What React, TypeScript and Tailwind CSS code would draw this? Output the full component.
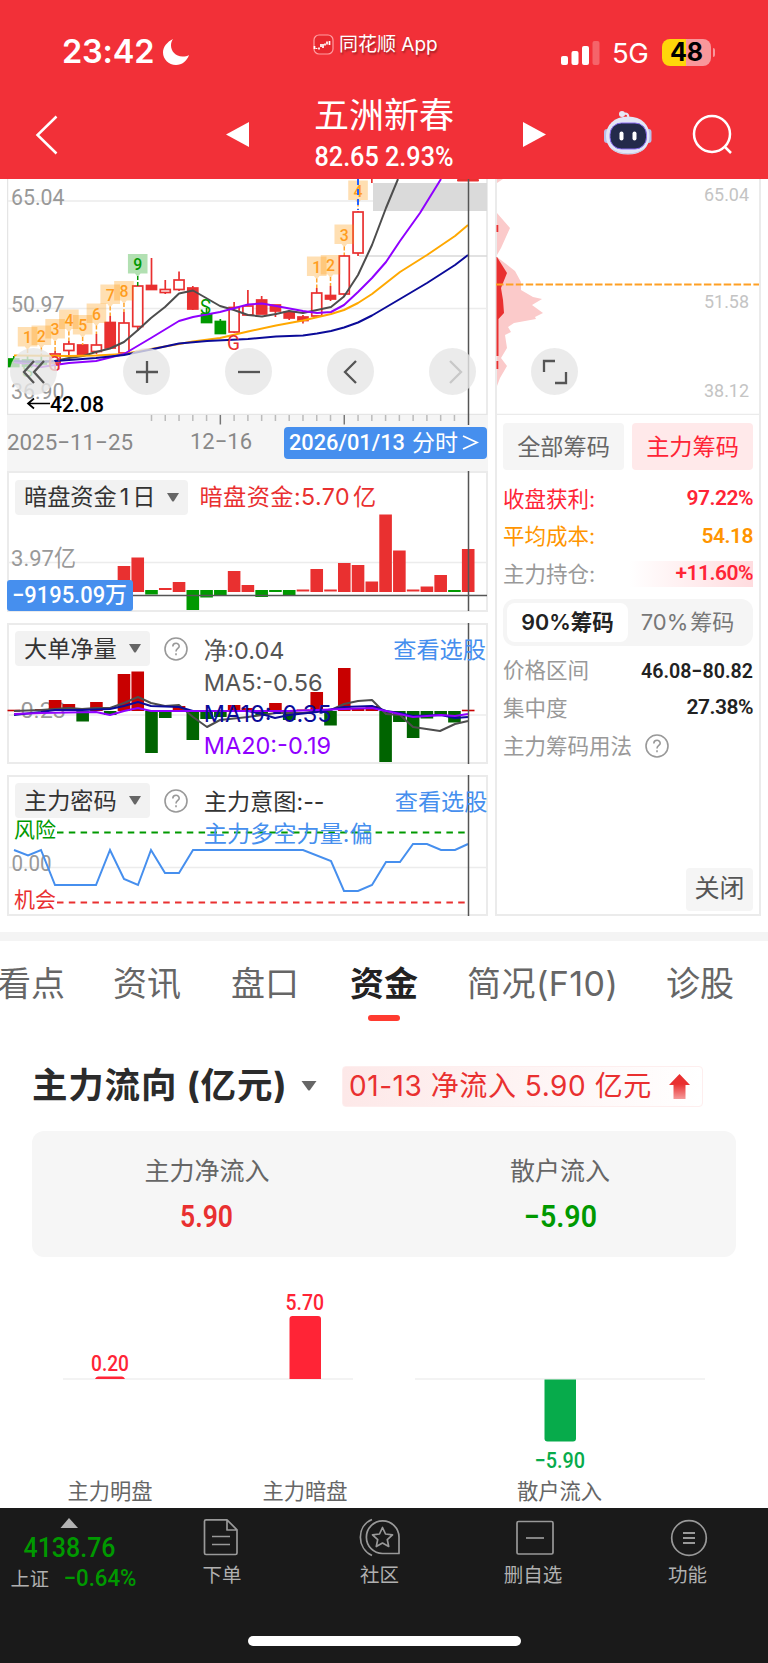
import type { ReactNode } from 'react'

const STEP = 13.77
const RED = '#e93030'
const GREEN = '#009900'

const cx = (i: number) => 13.8 + STEP * i

// [index, body top, body bottom, high, low, kind]
type Candle = [number, number, number, number, number, 'hollow' | 'red' | 'green']

const candles: Candle[] = [
  [0, 359, 366.5, 356, 366.5, 'green'],
  [1, 360, 366, 356, 368, 'green'],
  [2, 361, 364, 356, 366, 'green'],
  [3, 354, 363, 351, 370, 'hollow'],
  [4, 344, 350.5, 341, 355, 'hollow'],
  [5, 345, 354.5, 345, 354.5, 'red'],
  [6, 345, 351.5, 334, 354, 'hollow'],
  [7, 322.5, 348, 316, 349, 'red'],
  [8, 323, 353, 312, 355, 'hollow'],
  [9, 286, 326.5, 286, 331, 'hollow'],
  [10, 285.5, 289.5, 258, 289.5, 'red'],
  [11, 289.5, 292.5, 280, 294, 'hollow'],
  [12, 280, 289.5, 271.5, 291, 'hollow'],
  [13, 288, 309, 286, 310, 'red'],
  [14, 314, 322.5, 308, 323, 'green'],
  [15, 321.5, 333.5, 319, 333.5, 'green'],
  [16, 307.5, 332, 302, 333, 'hollow'],
  [17, 306, 315, 290, 316, 'hollow'],
  [18, 300, 314, 296, 314, 'red'],
  [19, 305, 311, 305, 317, 'red'],
  [20, 312, 318, 310, 320, 'red'],
  [21, 317, 320.5, 315, 323.5, 'red'],
  [22, 293, 316, 288, 318, 'hollow'],
  [23, 295.5, 299, 286, 301, 'red'],
  [24, 256, 294, 255, 296, 'hollow'],
  [25, 212, 253, 211, 256, 'hollow'],
  [26, 170, 175, 170, 183, 'red'],
]

// [index, top, digit, line end]
const counts: [number, number, string, number][] = [
  [1, 327, '1', 356],
  [2, 325.5, '2', 356],
  [3, 319, '3', 351],
  [4, 309.5, '4', 341],
  [5, 315, '5', 345],
  [6, 303.5, '6', 334],
  [7, 284.5, '7', 316],
  [8, 281, '8', 312],
  [9, 254, '9', 286],
  [22, 256.5, '1', 288],
  [23, 255, '2', 286],
  [24, 224.5, '3', 255],
  [25, 180.5, '4', 210],
]

const klineLines = [
  { color: '#4d4d4d', d: '27,362 55,361 69,358 83,356 96,352 110,348.5 124,342 138,330 151,318 165,307 179,293.5 193,290.5 207,298.5 220,306 234,310 248,315 262,316.5 276,314 289,311 303,313 317,310 331,307 344,296.5 358,275 372,245 386,208 398,179' },
  { color: '#ffa800', d: '14,355.5 69,356 96,355.5 124,354 151,349 193,341.5 220,338 248,331.5 276,325.5 303,320.5 331,314 344,310 358,303 372,294 400,272 427,255 455,236 468,225' },
  { color: '#9000ff', d: '14,362 27,364 41,367 55,365 69,363 96,361 124,354 151,338 179,321 193,317 220,312 248,304.5 262,303.5 276,306 303,311 317,313 331,312 344,305 358,292 372,278 386,262 400,241 420,213 441,179' },
  { color: '#0b0b99', d: '14,361 41,362 69,360 96,358 124,355 151,349.5 179,343.5 207,341 248,339 276,336.5 303,335.5 317,333.5 331,331 344,327.5 358,322.5 372,315.5 400,299 427,283 455,265 468,255' },
]

// [index, top, bottom, positive]
type Bar = [number, number, number, boolean]

const fundBars: Bar[] = [
  [8, 566, 592, true], [9, 557.5, 592, true], [10, 590, 594.5, false], [11, 588, 590, true],
  [12, 582, 592, true], [13, 590, 610, false], [14, 590, 597.5, false], [15, 590, 595, false],
  [16, 571, 592, true], [17, 585, 592, true], [18, 590, 597, false], [19, 590, 592, false],
  [20, 590, 595, false], [21, 589.5, 591.5, true], [22, 569, 592, true], [23, 589.5, 591.5, true],
  [24, 563, 592, true], [25, 565, 592, true], [26, 581.5, 592, true], [27, 514.5, 592, true],
  [28, 550.5, 592, true], [29, 589.5, 591.5, true], [30, 586.5, 592, true], [31, 575, 592, true],
  [32, 590, 592, false], [33, 549, 592, true],
]

const orderBars: Bar[] = [
  [0, 709.7, 711.3, true], [2, 709, 711, true], [3, 700, 711, true], [4, 704, 711, true],
  [5, 711, 721.5, false], [6, 702, 711, true], [7, 711, 715, false], [8, 674, 711, true],
  [9, 671.5, 711, true], [10, 711, 753, false], [11, 711, 718, false], [12, 706, 711, true],
  [13, 711, 740, false], [14, 711, 719, false], [15, 711, 717, false], [16, 705, 711, true],
  [17, 708, 711, true], [18, 711, 716, false], [19, 703, 711, true], [20, 711, 720, false],
  [21, 709.5, 711, true], [22, 692, 711, true], [23, 711, 725.5, false], [24, 668, 711, true],
  [25, 708, 711, true], [26, 706, 711, true], [27, 711, 762, false], [28, 711, 722, false],
  [29, 711, 738, false], [30, 711, 718.5, false], [31, 711, 716, false], [32, 711, 722.5, false],
  [33, 709.7, 711.3, true],
]

const orderLines = [
  { color: '#4d4d4d', d: '14,711 41,710 69,708 82,709 96,708 110,708 124,703 138,697 151,703 165,706 179,705 193,717 207,727 220,720 248,717 262,715 276,713 303,713 317,711 331,710 344,704 358,701 372,700 386,714 400,715 413,727 440,731 455,724 468,721' },
  { color: '#0b0b99', d: '14,715 41,712 55,710 82,710 110,709 124,706 138,702 151,706 179,707 193,711 220,711 248,711 262,714 275,718 289,715 317,712 344,707 372,706 386,711 400,713 413,716 441,715 455,718 468,717' },
  { color: '#9000ff', d: '14,714 41,713 96,712 110,715 124,711 138,708 151,711 289,711 317,710 344,709 372,708 386,711 413,717 441,715 455,716 468,714' },
]

interface LabelProps {
  x: number
  y: number
  w: number
  size: number
  fill: string
  weight?: number
  children: string
}

function Label({ x, y, w, size, fill, weight = 400, children }: LabelProps) {
  return (
    <text
      x={x}
      y={y}
      fontSize={size}
      fill={fill}
      fontWeight={weight}
      textLength={w}
      lengthAdjust="spacingAndGlyphs"
      className="font-[Roboto,'Noto_Sans_CJK_SC',sans-serif]"
    >
      {children}
    </text>
  )
}

function Lines({ items }: { items: { color: string; d: string }[] }) {
  return (
    <>
      {items.map((l) => (
        <polyline key={l.color} points={l.d} fill="none" stroke={l.color} strokeWidth="2" strokeLinejoin="round" />
      ))}
    </>
  )
}

function Bars({ items, up, down }: { items: Bar[]; up: string; down: string }) {
  return (
    <>
      {items.map(([i, top, bottom, positive]) => (
        <rect key={i} x={cx(i) - 6.3} y={top} width="12.6" height={bottom - top} fill={positive ? up : down} />
      ))}
    </>
  )
}

function StatusBar() {
  return (
    <div className="flex h-[92px] items-start text-white">
      <div className="ml-[62px] mt-[32px] flex w-[129px] items-center">
        <span className="w-[101px] text-[32.500px] leading-10 font-semibold tracking-[-0.2px]">23:42</span>
        <svg className="shrink-0" width="26" height="26" viewBox="0 0 26 26" fill="white">
          <path d="M10 0C4 3 0 8 0 13.500C0 20 5.500 26 13 26C19 26 24 22 26 16C24.500 17 22 17.500 19.500 17.500C12.500 17.500 8 12 8 6.500C8 4 8.700 2 10 0z" />
        </svg>
      </div>
      <div className="ml-[122px] mt-[31px] flex w-[141px] items-center gap-[5px]">
        <svg width="21" height="21" viewBox="0 0 21 21" fill="none">
          <rect x="1" y="1" width="19" height="19" rx="5" fill="#e8282f" stroke="#ff9ea2" strokeWidth="1.2" />
          <path d="M1.500 12v3M3.500 14v1M6 13.500v2M8 10v3M10 10v4M12 9.500v2M14 7.500v3M16.500 7v4" stroke="white" strokeWidth="1.700" />
        </svg>
        <span className="pt-px text-[19px] leading-[26px] whitespace-nowrap [text-shadow:1px_2px_2px_rgba(0,0,0,0.35)]">
          同花顺 App
        </span>
      </div>
      <div className="ml-[107px] mt-[37px] flex items-center">
        <svg width="39" height="26" viewBox="0 0 39 26" fill="white">
          <rect x="0" y="17" width="7" height="9" rx="2" />
          <rect x="10.500" y="12" width="7" height="14" rx="2" />
          <rect x="21" y="7" width="7" height="19" rx="2" />
          <rect x="31.500" y="2" width="7" height="24" rx="2" opacity=".25" />
        </svg>
        <span className="ml-[12px] w-[37px] pt-[2px] text-[27.500px] leading-7 tracking-[-0.5px]">5G</span>
        <div className="ml-[13px] flex h-[27px] w-[49px] items-center justify-center rounded-lg bg-[linear-gradient(90deg,#ffd60a_49%,#f9979b_49%)] pt-px text-[25px] font-bold text-black">
          48
        </div>
        <div className="ml-[2px] h-[9px] w-[2px] rounded-r bg-[#f9979b]" />
      </div>
    </div>
  )
}

function Robot() {
  return (
    <svg width="50" height="46" viewBox="0 0 50 46">
      <path d="M25 9C26 4 24 3 20 4" fill="none" stroke="#e6e8f6" strokeWidth="2.200" />
      <circle cx="19" cy="4" r="3" fill="#e6e8f6" />
      <rect x="1" y="19" width="6" height="14" rx="3" fill="#b9c0ea" />
      <rect x="42.500" y="19" width="6" height="14" rx="3" fill="#b9c0ea" />
      <path d="M25 6.500C39 6.500 46.500 15 46.500 26S39 44.500 25 44.500S3 37 3 26S11 6.500 25 6.500z" fill="#e3e6f6" />
      <path d="M8 38c9 7 25 7 34 0c-6 8-28 8-34 0z" fill="#c3c8e4" />
      <rect x="7" y="13" width="36.500" height="26" rx="11.500" fill="#232a4a" stroke="#8a6cf0" strokeWidth="1" />
      <rect x="16.500" y="21.500" width="4" height="9" rx="2" fill="white" />
      <rect x="29.500" y="21.500" width="4" height="9" rx="2" fill="white" />
    </svg>
  )
}

function Header() {
  return (
    <header className="h-[179px] bg-[#f23038]">
      <StatusBar />
      <div className="flex h-[87px] items-start text-white">
        <svg className="mt-[23px] ml-[35px] w-[24px]" height="40" viewBox="0 0 24 40" fill="none">
          <path d="M21.500 1.500L2.500 20l19 18.500" stroke="white" strokeWidth="2.500" />
        </svg>
        <svg className="mt-[30px] ml-[167px] w-[23px]" height="25" viewBox="0 0 23 25">
          <path d="M0 12.500L23 0v25z" fill="white" />
        </svg>
        <div className="ml-[33px] flex w-[204px] flex-col items-center">
          <span className="mt-[-1px] text-[35px] leading-[48px] whitespace-nowrap">五洲新春</span>
          <svg className="mt-[5px] overflow-visible" width="140" height="24" viewBox="0 0 140 24">
            <Label x={0.5} y={22} w={139} size={27.5} fill="#fff" weight={500}>82.65 2.93%</Label>
          </svg>
        </div>
        <svg className="mt-[30px] ml-[37px] w-[23px]" height="25" viewBox="0 0 23 25">
          <path d="M23 12.500L0 0v25z" fill="white" />
        </svg>
        <div className="mt-[18px] ml-[57px]"><Robot /></div>
        <svg className="mt-[22px] ml-[39px]" width="42" height="42" viewBox="0 0 42 42" fill="none" stroke="white" strokeWidth="2.500">
          <circle cx="20" cy="20" r="18" />
          <path d="M32.500 32.500l6.500 6.500" />
        </svg>
      </div>
    </header>
  )
}

function RoundButton({ children, faded }: { children: ReactNode; faded?: boolean }) {
  return (
    <div className="flex h-[47px] w-[47px] items-center justify-center rounded-full bg-[#e6e6e6]/80">
      <svg width="26" height="26" viewBox="0 0 26 26" fill="none" stroke={faded ? '#c8c8c8' : '#555'} strokeWidth="2.300">
        {children}
      </svg>
    </div>
  )
}

function KlineChart() {
  return (
    <div className="relative h-[236px]">
      <svg className="block" width="481" height="236" viewBox="7 179 481 236">
        <path d="M7.500 179V414.500H487V179" fill="none" stroke="#e5e5e5" strokeWidth="1.500" />
        <path d="M8 201H487M8 308.500H487" stroke="#ececec" strokeWidth="1.500" />
        <path d="M359 256H487" stroke="#d9d9d9" strokeWidth="1.500" />
        <rect x="373" y="183" width="114" height="28" fill="#dadada" />
        <Label x={11} y={204.5} w={53.5} size={22.5} fill="#999">65.04</Label>
        <Label x={11} y={311.5} w={53.5} size={22.5} fill="#999">50.97</Label>
        <Label x={11} y={398.5} w={53.5} size={22.5} fill="#999">36.90</Label>
        {candles.map(([i, top, bottom, high, low, kind]) => {
          const color = kind === 'green' ? GREEN : RED
          return (
            <g key={i} stroke={color} strokeWidth="1.700">
              <path d={`M${cx(i)} ${high}V${top}M${cx(i)} ${bottom}V${low}`} />
              <rect
                x={cx(i) - 5}
                y={top}
                width="10"
                height={bottom - top}
                fill={kind === 'hollow' ? 'white' : color}
              />
            </g>
          )
        })}
        <Lines items={klineLines} />
        {counts.map(([i, top, n, end]) => {
          const nine = n === '9'
          return (
            <g key={i}>
              <path
                d={`M${cx(i)} ${top + 22}V${end}`}
                stroke={nine ? GREEN : '#ffa52e'}
                strokeWidth="1.500"
                strokeDasharray="4 2"
              />
              <path
                d={`M${cx(i) - 9.800} ${top}h19.600v19.500h-7l-2.800 3.500l-2.800 -3.500h-7z`}
                fill={nine ? '#009900' : '#ff9500'}
                opacity=".3"
              />
              <Label x={cx(i) - 4.5} y={top + 16} w={9} size={17} fill={nine ? GREEN : '#ff9d1e'} weight={500}>{n}</Label>
            </g>
          )
        })}
        <path d="M358 179V210" stroke="#2262ff" strokeWidth="2" strokeDasharray="6 4" />
        <Label x={200} y={314} w={11} size={21} fill={GREEN}>S</Label>
        <Label x={22} y={377} w={11} size={19} fill={GREEN}>S</Label>
        <Label x={227} y={350} w={13} size={20} fill={RED}>G</Label>
        <Label x={48} y={371} w={13} size={20} fill={RED}>G</Label>
        <path d="M50 403.500H28M34 398.500l-6 5l6 5" fill="none" stroke="black" strokeWidth="1.700" />
        <Label x={50} y={411.5} w={54} size={22.5} fill="#000" weight={500}>42.08</Label>
        <rect x="457" y="179" width="22" height="2.500" rx="1" fill={RED} />
        <path d="M468.500 179V415" stroke="#555" strokeWidth="1.500" />
      </svg>
      <div className="absolute top-[169px] left-[3px] flex w-[466px] justify-between">
        <RoundButton><path d="M13 2L3 13l10 11M23 2L13 13l10 11" /></RoundButton>
        <div className="ml-[11px]"><RoundButton><path d="M13 2v22M2 13h22" /></RoundButton></div>
        <RoundButton><path d="M2 13h22" /></RoundButton>
        <RoundButton><path d="M18 2L7 13l11 11" /></RoundButton>
        <RoundButton faded><path d="M10 2l11 11L10 24" /></RoundButton>
      </div>
    </div>
  )
}

function DateAxis() {
  return (
    <div className="relative h-[56px] bg-[#f5f5f5]">
      <svg className="block" width="481" height="56" viewBox="7 415 481 56">
        {Array.from({ length: 23 }, (_, k) => k + 10).map((i) => {
          const major = i === 15 || i === 24
          return (
            <path
              key={i}
              d={`M${cx(i)} 415v${major ? 9.500 : 6}`}
              stroke={major ? '#777' : '#bbb'}
              strokeWidth="1.500"
            />
          )
        })}
        <path d="M468.500 415V425" stroke="#555" strokeWidth="1.500" />
        <Label x={7} y={449.5} w={126} size={22.5} fill="#888">2025−11−25</Label>
        <Label x={190} y={449} w={62} size={22.5} fill="#888">12−16</Label>
      </svg>
      <div className="absolute top-[12px] right-[1px] h-[32px] w-[203px] rounded bg-[#468fee]">
        <svg width="203" height="32" viewBox="0 0 203 32">
          <Label x={5} y={22.5} w={116} size={22.5} fill="#fff" weight={500}>2026/01/13</Label>
          <Label x={128} y={23.5} w={46} size={23} fill="#fff">分时</Label>
          <path d="M179 9l14 6.500l-14 6.500" fill="none" stroke="white" strokeWidth="1.700" />
        </svg>
      </div>
    </div>
  )
}

function Picker({ children }: { children: ReactNode }) {
  return (
    <div className="flex h-[35px] shrink-0 items-center rounded bg-[#f2f2f2] pr-[9px] pl-[9px] text-[23.200px] whitespace-nowrap text-[#333]">
      <span className="pt-px">{children}</span>
      <svg className="ml-[12px]" width="12" height="9" viewBox="0 0 12 9">
        <path d="M0 0h12L7 8q-1 1-2 0z" fill="#666" />
      </svg>
    </div>
  )
}

function Help() {
  return (
    <svg className="ml-[14px] shrink-0" width="24" height="24" viewBox="0 0 24 24" fill="none" stroke="#999" strokeWidth="1.600">
      <circle cx="12" cy="12" r="11" />
      <path d="M8.800 9.500c0-4.200 6.400-4.200 6.400-.3c0 2.300-3.200 2.300-3.200 5.300M12 16.300v2" />
    </svg>
  )
}

function Panel({ chart, children }: { chart: ReactNode; children: ReactNode }) {
  return (
    <section className="relative h-[141px] w-[481px] border-2 border-[#ebebeb] bg-white">
      <div className="absolute -top-[2px] -left-[2px]">{chart}</div>
      <div className="relative pt-[6px] pl-[6px]">{children}</div>
    </section>
  )
}

function FundPanel() {
  return (
    <Panel
      chart={
        <svg width="481" height="141" viewBox="7 471 481 141">
          <path d="M9 562.500H486" stroke="#ececec" strokeWidth="1.500" />
          <Label x={11} y={566} w={65} size={22.5} fill="#999">3.97亿</Label>
          <Bars items={fundBars} up={RED} down={GREEN} />
          <path d="M8 595.500H487M468.500 471V611" stroke="#555" strokeWidth="1.500" />
          <rect x="7" y="580" width="126" height="31" rx="3" fill="#468fee" />
          <Label x={12} y={603} w={115} size={23} fill="#fff" weight={500}>−9195.09万</Label>
        </svg>
      }
    >
      <div className="flex items-center">
        <Picker>
          暗盘资金<span className="mx-[3px]">1</span>日
        </Picker>
        <span className="ml-[11px] pt-px text-[23.200px] leading-[35px] tracking-[0.450px] text-[#e93030]">
          暗盘资金:5.70<span className="ml-[3px]">亿</span>
        </span>
      </div>
    </Panel>
  )
}

function OrderPanel() {
  return (
    <Panel
      chart={
        <svg width="481" height="141" viewBox="7 623 481 141">
          <path d="M9 715H486" stroke="#ececec" strokeWidth="1.500" />
          <Label x={14} y={718} w={52} size={21.5} fill="#999">-0.23</Label>
          <Bars items={orderBars} up="#c80000" down="#006400" />
          <Lines items={orderLines} />
          <path d="M468.500 623V764" stroke="#555" strokeWidth="1.500" />
        </svg>
      }
    >
      <div className="flex items-start">
        <Picker>大单净量</Picker>
        <div className="flex h-[35px] items-center"><Help /></div>
        <div className="ml-[16px] w-[160px] text-[23.500px] leading-[31.500px] text-[#555]">
          <p className="mt-[4px]">净:0.04</p>
          <p>MA5:-0.56</p>
          <p className="text-[#0b0b99]">MA10:-0.35</p>
          <p className="text-[#9000ff]">MA20:-0.19</p>
        </div>
        <span className="ml-[32px] pt-px text-[23.200px] leading-[36px] whitespace-nowrap text-[#468fee]">查看选股</span>
      </div>
    </Panel>
  )
}

function CodePanel() {
  return (
    <Panel
      chart={
        <svg width="481" height="141" viewBox="7 775 481 141">
          <path d="M9 867.500H486" stroke="#ececec" strokeWidth="1.500" />
          <path d="M57 832.500H466" stroke={GREEN} strokeWidth="1.800" strokeDasharray="6.500 5.300" />
          <path d="M57 902.500H466" stroke={RED} strokeWidth="1.800" strokeDasharray="6.500 5.300" />
          <Label x={11.5} y={871} w={40} size={22.5} fill="#999">0.00</Label>
          <Label x={14} y={837} w={42} size={21} fill={GREEN}>风险</Label>
          <Label x={14} y={907} w={42} size={21} fill={RED}>机会</Label>
          <polyline
            points="14,850 28,855.5 41,850 55,885 96,885 110,850 124,879 138,885 151,850 165,873 179,873 193,850 303,850 331,861 344,891 358,891 372,885 386,862 400,862 413,844 427,844 441,850 455,850 468,844"
            fill="none"
            stroke="#468fee"
            strokeWidth="2"
          />
          <path d="M468.500 775V916" stroke="#555" strokeWidth="1.500" />
        </svg>
      }
    >
      <div className="flex items-start">
        <Picker>主力密码</Picker>
        <div className="flex h-[35px] items-center"><Help /></div>
        <div className="ml-[16px] w-[170px] text-[23.200px] leading-[32px] whitespace-nowrap text-[#333]">
          <p className="mt-[3px]">主力意图:--</p>
          <p className="text-[#468fee]">主力多空力量:偏</p>
        </div>
        <span className="ml-[22px] pt-px text-[23.200px] leading-[36px] whitespace-nowrap text-[#468fee]">查看选股</span>
      </div>
    </Panel>
  )
}

function ChipChart() {
  return (
    <div className="relative h-[236px]">
      <svg className="block" width="265" height="236" viewBox="495 179 265 236">
        <path d="M497 213L510 228L501 248L497 255V257L515 271L521 282L521 290L533 297L542 299L532 305L543 313L535 317L536 319L514 323L508 327L511 332L505 335L507 348L501 358L507 366L500 378L497 386Z" fill="#fbcaca" />
        <path d="M497 179h6l-6 4z" fill="#fbcaca" />
        <path d="M497 257L507 273L501 288L503 300L504 313L498.500 319V356H496.500V257ZM496.500 225h1.800v7h-1.800zM496.500 361h1.800v8h-1.800z" fill={RED} />
        <path d="M496 284.500H759" stroke="#ffa024" strokeWidth="2" strokeDasharray="7.500 2.400" />
        <Label x={704} y={201} w={45} size={19} fill="#c4c4c4">65.04</Label>
        <Label x={704} y={308} w={45} size={19} fill="#c4c4c4">51.58</Label>
        <Label x={704} y={397} w={45} size={19} fill="#c4c4c4">38.12</Label>
        <path d="M496 414.500H760" stroke="#ebebeb" strokeWidth="1.500" />
      </svg>
      <div className="absolute top-[169px] left-[36px]">
        <RoundButton><path d="M13 2H2v11M13 24h11V13" /></RoundButton>
      </div>
    </div>
  )
}

const numClass = "ml-auto font-[Roboto,sans-serif] text-[21px] font-semibold tracking-[-0.500px]"

function ChipPanel() {
  return (
    <aside className="h-[737px] w-[266px] border-x-2 border-b-2 border-[#ebebeb] bg-white">
      <div className="-ml-[2px] w-[265px]"><ChipChart /></div>
      <div className="flex flex-col px-[6px] pt-[8px] text-[21.500px] text-[#999]">
        <div className="flex justify-between text-[23.200px]">
          <span className="flex h-[47px] w-[121px] items-center justify-center rounded bg-[#f5f5f5] pt-px text-[#666]">全部筹码</span>
          <span className="flex h-[47px] w-[121px] items-center justify-center rounded bg-[#ffe9ea] pt-px text-[#ff2436]">主力筹码</span>
        </div>
        <div className="mt-[10px] flex h-[37.500px] items-center text-[#ff2436]">
          收盘获利:<span className={numClass}>97.22%</span>
        </div>
        <div className="flex h-[37.500px] items-center text-[#ff9500]">
          平均成本:<span className={numClass}>54.18</span>
        </div>
        <div className="flex h-[37.500px] items-center">
          主力持仓:
          <div className="ml-auto flex h-[26px] w-[124px] items-center bg-linear-to-r from-white to-[#ffdcdf] text-[#ff2436]">
            <span className={numClass}>+11.60%</span>
          </div>
        </div>
        <div className="mt-[6px] flex h-[47px] items-center rounded-xl bg-[#f5f5f5] px-[4px] text-[22px] whitespace-nowrap">
          <span className="flex h-[39px] w-[121px] items-center justify-center rounded-lg bg-white text-[21.500px] font-semibold text-[#222]">90%筹码</span>
          <span className="flex flex-1 justify-center gap-[2px] pr-[2px] text-[#777]">70%<span>筹码</span></span>
        </div>
        <div className="mt-[6px] flex h-[37.500px] items-center">
          价格区间
          <svg className="ml-auto overflow-visible" width="112" height="16" viewBox="0 0 112 16">
            <Label x={0} y={15.5} w={112} size={21} fill="#222" weight={600}>46.08−80.82</Label>
          </svg>
        </div>
        <div className="flex h-[37.500px] items-center">
          集中度<span className={`${numClass} text-[#222]`}>27.38%</span>
        </div>
        <div className="flex h-[39px] items-center">主力筹码用法<div className="-ml-[1px]"><Help /></div></div>
        <div className="mt-[102px] flex h-[43px] w-[67px] items-center justify-center self-end rounded bg-[#f5f5f5] text-[25px] whitespace-nowrap text-[#555]">
          关闭
        </div>
      </div>
    </aside>
  )
}

function Tabs() {
  return (
    <nav className="flex h-[101px] items-start overflow-hidden pt-[18px] text-[34px] leading-[50px] whitespace-nowrap text-[#666]">
      <span className="-ml-[3px] w-[116px] shrink-0">看点</span>
      <span className="w-[118px] shrink-0">资讯</span>
      <span className="w-[119px] shrink-0">盘口</span>
      <div className="flex w-[117px] shrink-0 flex-col text-[#222]">
        <span className="font-bold">资金</span>
        <span className="mt-[6px] ml-[18px] h-[6px] w-[32px] rounded-full bg-[#ff3b30]" />
      </div>
      <span className="w-[199px] shrink-0 tracking-[0.450px]">简况(F10)</span>
      <span className="shrink-0">诊股</span>
    </nav>
  )
}

function FlowSection() {
  return (
    <section className="px-8">
      <div className="flex h-[89px] items-center pb-[1px]">
        <h2 className="w-[254px] text-[35.500px] font-bold tracking-[0.800px] whitespace-nowrap text-[#2b2b2b]">主力流向 (亿元)</h2>
        <svg className="ml-[15px]" width="16" height="10" viewBox="0 0 15 10">
          <path d="M0 0h15L8.500 9q-1 1-2 0z" fill="#666" />
        </svg>
        <div className="ml-[25px] flex h-[41px] w-[361px] items-center rounded border border-[#feeeee] bg-linear-to-r from-[#fde8e8] to-white pl-[6px] text-[28px] whitespace-nowrap text-[#e93030]">
          <span className="w-[306px] tracking-[0.550px]">01-13 净流入 5.90 亿元</span>
          <svg className="ml-[14px]" width="21" height="25" viewBox="0 0 21 25">
            <defs>
              <linearGradient id="arrow" x1="0" y1="0" x2="0" y2="1">
                <stop offset="0.4" stopColor="#e93030" />
                <stop offset="1" stopColor="#f59a9a" />
              </linearGradient>
            </defs>
            <path d="M10.500 0L21 11h-4.500v14h-12V11H0z" fill="url(#arrow)" />
          </svg>
        </div>
      </div>
      <div className="grid h-[126px] grid-cols-2 rounded-xl bg-[#f6f6f6] text-center text-[25px] text-[#666]">
        <div className="flex flex-col items-center pt-[21px] pr-[2px]">
          <span className="leading-[38px]">主力净流入</span>
          <svg className="mt-[12px] overflow-visible" width="54" height="28" viewBox="0 0 54 28">
            <Label x={0} y={25} w={53} size={31} fill={RED} weight={600}>5.90</Label>
          </svg>
        </div>
        <div className="flex flex-col items-center pt-[21px]">
          <span className="leading-[38px]">散户流入</span>
          <svg className="mt-[12px] overflow-visible" width="74" height="28" viewBox="0 0 74 28">
            <Label x={1} y={25} w={73} size={31} fill={GREEN} weight={600}>−5.90</Label>
          </svg>
        </div>
      </div>
      <svg className="block" width="704" height="251" viewBox="32 1257 704 251">
        <path d="M63 1379H353M415 1379H705" stroke="#f0f0f0" strokeWidth="1.500" />
        <path d="M95 1379q1 -2.500 3 -2.500h24q2 0 3 2.500z" fill="#ff2436" />
        <path d="M289.500 1379V1319q0 -3 3 -3h25.500q3 0 3 3v60z" fill="#ff2436" />
        <path d="M544.500 1379.500v59q0 3 3 3h25.500q3 0 3 -3v-59z" fill="#07ab4b" />
        <Label x={91} y={1371} w={38} size={22} fill="#ff2436" weight={500}>0.20</Label>
        <Label x={285.5} y={1310} w={38.5} size={22} fill="#ff2436" weight={500}>5.70</Label>
        <Label x={534.5} y={1467.500} w={50.5} size={22} fill="#07ab4b" weight={500}>−5.90</Label>
        <Label x={67.500} y={1498.500} w={85} size={21.3} fill="#666">主力明盘</Label>
        <Label x={262.500} y={1498.500} w={85} size={21.3} fill="#666">主力暗盘</Label>
        <Label x={517} y={1498.500} w={85} size={21.3} fill="#666">散户流入</Label>
      </svg>
    </section>
  )
}

function NavItem({ label, width, children }: { label: string; width: string; children: ReactNode }) {
  return (
    <div className={`flex shrink-0 flex-col items-center text-[19.500px] text-[#b0b0b0] ${width}`}>
      <svg width="42" height="40" viewBox="0 0 42 40" fill="none" stroke="#999" strokeWidth="1.700" strokeLinejoin="round">
        {children}
      </svg>
      <span className="mt-[5px] leading-[24px]">{label}</span>
    </div>
  )
}

function BottomBar() {
  return (
    <footer className="h-[155px] bg-[#1a1a1a] pt-[10px]">
      <div className="flex h-[118px]">
        <svg className="shrink-0" width="144" height="72" viewBox="0 1518 144 72">
          <path d="M60.500 1528L69 1518l9 10z" fill="#b3b3b3" />
          <Label x={23.5} y={1557} w={92} size={28} fill={GREEN} weight={500}>4138.76</Label>
          <Label x={10.500} y={1586} w={38.5} size={19.5} fill="#b0b0b0">上证</Label>
          <Label x={63.500} y={1585.500} w={73} size={23} fill={GREEN} weight={500}>−0.64%</Label>
        </svg>
        <NavItem label="下单" width="w-[156px]">
          <path d="M5 1.800h21l10 10V35q0 1.500-1.500 1.500H5q-1.500 0-1.500-1.500V3.300Q3.500 1.800 5 1.800zM26 2v10h10M11 18.500h18M11 26.500h18" />
        </NavItem>
        <NavItem label="社区" width="w-[159px]">
          <path d="M13 1.500C-2.500 8-2.500 30 13 37.500" />
          <path d="M40 35.500V19A16.300 16.300 0 1 0 23.500 35.500z" />
          <path d="M23.500 9.500l3 6.500l7 .8l-5.200 4.800l1.400 6.900l-6.200-3.400l-6.200 3.400l1.400-6.900l-5.200-4.800l7-.8z" />
        </NavItem>
        <NavItem label="删自选" width="w-[148px]">
          <rect x="5" y="3.500" width="36" height="32.500" rx="1.500" />
          <path d="M14 20h18" />
        </NavItem>
        <NavItem label="功能" width="w-[161px]">
          <circle cx="22" cy="20" r="17.300" />
          <path d="M16 15h12M16 20h12M16 25h12" strokeWidth="2" />
        </NavItem>
      </div>
      <div className="mx-auto h-[10px] w-[273px] rounded-full bg-white" />
    </footer>
  )
}

export default function App() {
  return (
    <div className="h-[1663px] w-[768px] overflow-hidden bg-white font-[Inter,'Noto_Sans_CJK_SC',sans-serif]">
      <Header />
      <main>
        <div className="flex h-[753px] items-start pl-[7px]">
          <div className="flex w-[481px] shrink-0 flex-col">
            <KlineChart />
            <DateAxis />
            <div className="flex flex-col gap-[11px]">
              <FundPanel />
              <OrderPanel />
              <CodePanel />
            </div>
          </div>
          <div className="ml-[7px]"><ChipPanel /></div>
        </div>
        <div className="h-[9px] bg-[#f4f4f4]" />
        <Tabs />
        <FlowSection />
      </main>
      <BottomBar />
    </div>
  )
}
